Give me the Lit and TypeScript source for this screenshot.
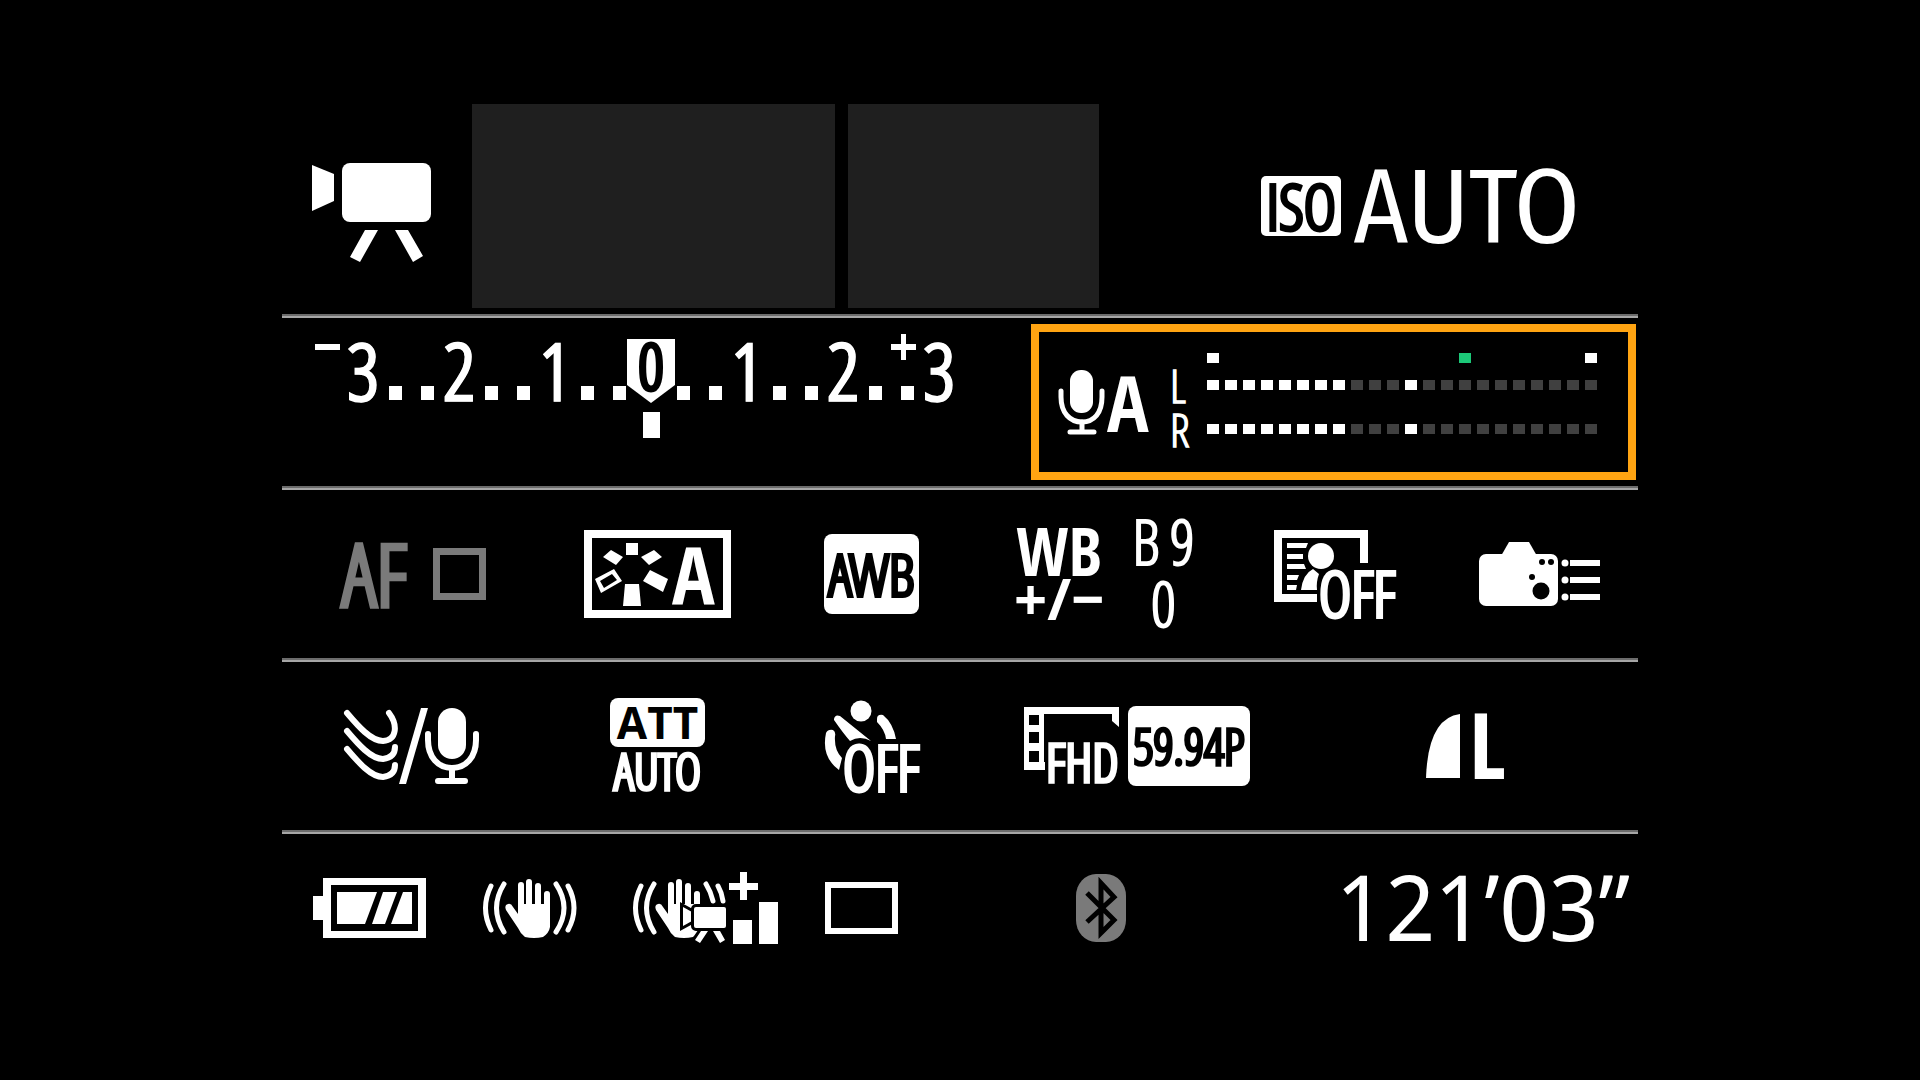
import { LitElement, html, css, svg } from "lit";
import { customElement, property, state } from "lit/decorators.js";
import { classMap } from "lit/directives/class-map.js";

const shared = css`
  button {
    margin: 0;
    padding: 0;
    border: 0;
    background: none;
    color: inherit;
    font: inherit;
    text-align: left;
    cursor: pointer;
  }
  svg {
    display: block;
    flex: none;
    overflow: visible;
    fill: currentColor;
  }
  .line {
    fill: none;
    stroke: currentColor;
  }
  .round {
    stroke-linecap: round;
    stroke-linejoin: round;
  }
  .hole {
    fill: #000;
  }
  .slim {
    font-family: "Open Sans Condensed Light", "Fira Sans Condensed", "Open Sans", sans-serif;
    font-weight: 700;
  }
  .thick {
    -webkit-text-stroke: 2px currentColor;
  }
  text.thick {
    stroke: currentColor;
    stroke-width: 2px;
  }
  .heavy {
    font-family: "Open Sans Condensed", "Open Sans", sans-serif;
    font-weight: 700;
  }
`;

/** Exposure compensation scale, from -3 to +3 in third stops. */
@customElement("exposure-scale")
class ExposureScale extends LitElement {
  @property({ type: Number }) value = 0;

  static styles = [
    shared,
    css`
      :host { display: block; }
      .digit { font-size: 78px; text-anchor: middle; stroke: currentColor; stroke-width: 1px; }
      .zero { font-size: 64px; text-anchor: middle; fill: #000; stroke: #000; stroke-width: 2px; }
    `,
  ];

  render() {
    const pitch = 32;
    const mid = 338;
    const steps = Array.from({ length: 19 }, (_, i) => i - 9);
    const needle = mid + this.value * 3 * pitch;
    return html`
      <svg width="640" height="108" viewBox="0 0 640 108" role="img" aria-label="Exposure compensation">
        <rect x="2" y="14" width="25" height="6" />
        <path d="M578 14h10v-10h5v10h10v6h-10v10h-5v-10h-10z" />
        ${steps.map((s) => {
          const x = mid + s * pitch;
          if (s === 0) return svg`
            <path d="M${x - 24} 9h48v46l-24 18l-24 -18z" />
            <text class="slim zero" x=${x} y="60">0</text>`;
          return s % 3
            ? svg`<rect x=${x - 6} y="56" width="13" height="14" />`
            : svg`<text class="slim digit" x=${x} y="70">${Math.abs(s / 3)}</text>`;
        })}
        <rect x=${needle - 8} y="82" width="17" height="26" />
      </svg>
    `;
  }
}

/** Two-channel audio level meter with reference marks. */
@customElement("level-meter")
class LevelMeter extends LitElement {
  @property({ type: Number }) level = 8;
  @property({ type: Number }) peak = 11;

  static styles = [
    shared,
    css`
      :host {
        display: grid;
        grid-template-columns: 37px auto;
        grid-template-rows: 10px 44px 44px;
        align-items: center;
      }
      .name { font-size: 46px; line-height: 44px; }
      .bar {
        grid-column: 2;
        display: grid;
        grid-template-columns: repeat(22, 12px);
        gap: 6px;
      }
      .bar i { height: 10px; }
      .bar i.off { background: #404040; }
      .bar i.on { background: #fff; }
      .bar i.safe { background: #1cc878; }
    `,
  ];

  private bar(pick: (i: number) => string) {
    return html`<span class="bar">
      ${Array.from({ length: 22 }, (_, i) => html`<i class=${pick(i)}></i>`)}
    </span>`;
  }

  render() {
    const channel = (i: number) => (i < this.level || i === this.peak ? "on" : "off");
    return html`
      ${this.bar((i) => (i === 14 ? "safe" : i === 0 || i === 21 ? "on" : ""))}
      <span class="name slim">L</span>${this.bar(channel)}
      <span class="name slim">R</span>${this.bar(channel)}
    `;
  }
}

const hand = svg`
  <g class="line round" stroke-width="5">
    <path d="M491 886Q480 908 491 930M504 884Q489 908 504 932" />
  </g>
  <g class="line round" stroke-width="6">
    <path d="M521 885V910M529 882V910M538 886V910M547 894V912" />
  </g>
  <path d="M518 904H550V927Q549 933 543 937Q534 939 525 937Q520 933 518 928L506 910Q504 905 508 904Q511 903 513 907L518 914Z" />
`;

const icons = {
  movie: html`<svg width="120" height="112" viewBox="312 150 120 112" role="img" aria-label="Movie recording">
    <path d="M312 165L334 174V201L312 211Z" />
    <rect x="342" y="163" width="89" height="59" rx="8" />
    <path d="M365 230H378L360 262L350 257ZM395 230H408L423 256L413 262Z" />
  </svg>`,
  mic: html`<svg width="46" height="66" viewBox="1058 369 46 66" aria-hidden="true">
    <rect x="1070" y="370" width="23" height="43" rx="11" />
    <path class="line round" stroke-width="5" d="M1061 391V397C1061 413 1070 422 1082 422C1094 422 1102 413 1102 397V391" />
    <path class="line round" stroke-width="5" d="M1082 422V432M1070 432H1094" />
  </svg>`,
  style: html`<svg width="148" height="88" viewBox="584 530 148 88" role="img" aria-label="Picture style">
    <rect class="line" stroke-width="8" x="588" y="534" width="139" height="80" />
    <rect x="626" y="543" width="12" height="12" />
    <path d="M603 557L611 550L623 557L616 565ZM654 550L662 557L649 565L641 557Z" />
    <path d="M625 584H639L641 606H623ZM650 570L668 579L663 592L643 581Z" />
    <path fill-rule="evenodd" d="M595 579L614 569L622 581L601 593ZM600 581L604 588L617 580L612 574Z" />
    <text class="heavy" font-size="80" x="672" y="604">A</text>
  </svg>`,
  lighting: html`<svg width="124" height="90" viewBox="1274 531 124 90" role="img" aria-label="Auto lighting optimizer">
    <path class="line" stroke-width="8" d="M1364 565V536H1278V600H1317" />
    <path d="M1287 545H1308L1306 550H1287ZM1287 556H1303V561H1287ZM1287 566H1304L1306 571H1287ZM1287 577H1299L1297 582H1287ZM1287 587H1297L1296 592H1287Z" />
    <circle cx="1321" cy="558" r="13" />
    <path d="M1301 592Q1303 576 1313 571L1319 576Q1316 584 1317 592Z" />
    <text class="slim thick" font-size="62" x="1319" y="619">OFF</text>
  </svg>`,
  controls: html`<svg width="124" height="66" viewBox="1477 541 124 66" role="img" aria-label="Custom controls">
    <path d="M1500 556L1508 542H1528L1536 556Z" />
    <rect x="1478" y="554" width="79" height="52" rx="7" />
    <g class="hole">
      <circle cx="1541" cy="562" r="3" />
      <circle cx="1550" cy="562" r="3" />
      <circle cx="1531" cy="577" r="3" />
      <circle cx="1540" cy="591" r="8.5" />
    </g>
    <circle cx="1564" cy="563" r="3.5" />
    <circle cx="1564" cy="580" r="3.5" />
    <circle cx="1564" cy="597" r="3.5" />
    <path d="M1569 560H1599V566H1569ZM1569 577H1599V583H1569ZM1569 594H1599V600H1569Z" />
  </svg>`,
  wind: html`<svg width="138" height="80" viewBox="343 706 138 80" role="img" aria-label="Wind filter">
    <path class="line round" stroke-width="6"
      d="M347 713C358 726 371 741 383 741C397 740 398 725 389 713M347 731C358 744 371 759 383 759C391 758 395 754 395 747M347 749C358 762 371 777 383 777C391 776 395 772 395 765" />
    <path d="M399 784L421 708H428L406 784Z" />
    <rect x="438" y="708" width="28" height="51" rx="14" />
    <path class="line round" stroke-width="6" d="M428 734V740C428 757 438 768 452 768C466 768 476 757 476 740V734" />
    <path class="line round" stroke-width="6" d="M452 769V781M438 781H465" />
  </svg>`,
  timer: html`<svg width="98" height="94" viewBox="825 698 98 94" role="img" aria-label="Self-timer">
    <circle cx="861" cy="710" r="10.5" />
    <path d="M877 718Q877 713 883 714Q893 722 896 738H886Q885 729 877 721Z" />
    <path d="M834 718Q835 713 840 715L871 740Q860 734 850 740Q843 732 834 719Z" />
    <path d="M826 732Q828 728 833 729Q836 731 835 735Q834 749 842 757L839 769Q821 756 826 732Z" />
    <text class="slim thick" font-size="62" x="843" y="790">OFF</text>
  </svg>`,
  quality: html`<svg width="102" height="80" viewBox="1024 706 102 80" role="img" aria-label="Movie recording size">
    <path fill-rule="evenodd"
      d="M1024 707H1119V727L1112 721V714H1044V762H1045V770H1024ZM1029 715V725H1039V715ZM1029 732V743H1039V732ZM1029 751V762H1039V751Z" />
    <text class="slim thick" font-size="54" x="1046" y="782">FHD</text>
  </svg>`,
  still: html`<svg width="92" height="68" viewBox="1424 712 92 68" role="img" aria-label="Still image quality">
    <path d="M1459 714V778H1425Q1427 718 1459 714Z" />
    <text class="heavy" font-size="92" x="1468" y="779">L</text>
  </svg>`,
  battery: html`<svg width="114" height="60" viewBox="313 878 114 60" role="img" aria-label="Battery level">
    <path fill-rule="evenodd" d="M323 878H426V938H323V920H313V896H323ZM331 885V931H418V885Z" />
    <path d="M337 892H377L365 924H337ZM383 892H397L385 924H372ZM403 892H412V924H391Z" />
  </svg>`,
  steady: html`<svg width="94" height="62" viewBox="483 877 94 62" role="img" aria-label="Image stabilizer">
    ${hand}
    <path class="line round" stroke-width="5" d="M556 884Q572 908 556 932M568 886Q580 908 568 930" />
  </svg>`,
  digital: html`<svg width="146" height="74" viewBox="633 871 146 74" role="img" aria-label="Digital image stabilizer">
    <g transform="translate(150 0)">${hand}</g>
    <path class="line round" stroke-width="5" d="M706 884Q711 892 713 901M718 886Q722 893 723 901" />
    <g stroke="#000" stroke-width="6" paint-order="stroke">
      <path d="M683 907L692 912V921L683 926Z" />
      <rect x="694" y="907" width="32" height="21" rx="2" />
      <path d="M701 931H708L700 943L695 940ZM713 931H720L725 940L720 943Z" />
    </g>
    <path d="M729 883H740V872H747V883H758V890H747V900H740V890H729Z" />
    <path d="M733 920H752V944H733ZM759 902H778V944H759Z" />
  </svg>`,
  bluetooth: html`<svg width="50" height="68" viewBox="1076 874 50 68" role="img" aria-label="Bluetooth off">
    <rect x="1076" y="874" width="50" height="68" rx="20" ry="22" />
    <path fill="none" stroke="#000" stroke-width="5" d="M1087 893L1114 920L1101 933V883L1114 897L1087 922" />
  </svg>`,
};

@customElement("app-root")
class AppRoot extends LitElement {
  @state() private selected = "audio";

  static styles = [
    shared,
    css`
      :host {
        display: block;
        box-sizing: border-box;
        min-height: 100vh;
        padding: 104px 16px 98px;
        background: #000;
        color: #fff;
        font-family: "Fira Sans Condensed", "Open Sans", sans-serif;
      }
      main {
        max-width: 1356px;
        margin: 0 auto;
      }
      .row {
        display: grid;
        align-items: center;
        min-height: 168px;
      }
      .rule {
        height: 2px;
        margin: 0;
        border: 0;
        border-bottom: 2px solid #a6a6a6;
        background: #6c6c6c;
      }
      .top {
        grid-template-columns: 160fr 363fr 13fr 251fr 539fr;
        min-height: 204px;
        padding: 0 0 6px 30px;
      }
      .levels {
        grid-template-columns: 749fr 607fr;
      }
      .modes {
        grid-template-columns: 246fr 240fr 190fr 260fr 204fr 160fr;
        padding-left: 56px;
      }
      .record {
        grid-template-columns: 267fr 215fr 199fr 401fr 213fr;
        padding-left: 61px;
      }
      .status {
        grid-template-columns: 170fr 150fr 192fr 251fr 100fr 462fr;
        min-height: 148px;
        padding-left: 31px;
      }
      .cell {
        display: flex;
        align-items: center;
      }
      .blank {
        align-self: stretch;
        background: #1f1f1f;
      }
      .blank.last {
        grid-column: 4;
      }
      .iso {
        justify-content: flex-end;
        gap: 12px;
        padding-right: 58px;
      }
      .iso .value {
        padding-top: 4px;
        font-size: 105px;
        line-height: 104px;
      }
      .badge {
        display: flex;
        align-items: center;
        justify-content: center;
        border-radius: 8px;
        background: #fff;
        color: #000;
      }
      .badge.iso-mark {
        width: 80px;
        height: 60px;
        border-radius: 5px;
        font-size: 62px;
        line-height: 60px;
      }
      .badge.awb {
        width: 95px;
        height: 80px;
        font-size: 58px;
        line-height: 80px;
      }
      .badge.rate {
        width: 122px;
        height: 80px;
        font-size: 50px;
        line-height: 80px;
      }
      .badge.att {
        width: 95px;
        height: 49px;
        font-family: "Open Sans", sans-serif;
        font-size: 44px;
        font-weight: 700;
        line-height: 49px;
      }
      .scale {
        justify-self: start;
        padding-left: 31px;
        align-self: start;
        padding-top: 12px;
      }
      .audio {
        align-self: stretch;
        margin: 6px 2px 6px 0;
        padding-left: 19px;
        border: 8px solid transparent;
      }
      .audio.selected {
        border-color: #ffa412;
      }
      .audio .auto {
        width: 63px;
        margin-left: 3px;
        font-size: 78px;
        line-height: 80px;
      }
      .dim {
        color: #7a7a7a;
      }
      .af {
        gap: 26px;
        padding-left: 4px;
        font-size: 86px;
        line-height: 86px;
      }
      .frame {
        width: 39px;
        height: 38px;
        border: 7px solid currentColor;
      }
      .shift {
        gap: 28px;
      }
      .stack {
        display: flex;
        flex-direction: column;
        align-items: center;
      }
      .wb {
        font-size: 66px;
        line-height: 48px;
      }
      .sign {
        font-family: "Open Sans", sans-serif;
        font-size: 58px;
        font-weight: 700;
        line-height: 48px;
      }
      .amount {
        font-size: 62px;
        line-height: 62px;
        padding-bottom: 4px;
      }
      .amount .pair {
        display: flex;
        gap: 10px;
      }
      .att-auto {
        font-size: 50px;
        line-height: 48px;
      }
      .film {
        gap: 2px;
      }
      .shots {
        width: 61px;
        height: 40px;
        border: 6px solid #fff;
      }
      .time {
        justify-self: end;
        padding-right: 8px;
        font-family: "Noto Sans Display", "Noto Sans", sans-serif;
        font-size: 92px;
        font-weight: 400;
        line-height: 90px;
        padding-bottom: 4px;
      }
    `,
  ];

  private cell(id: string, label: string, classes: string, content: unknown) {
    const map: Record<string, boolean> = { cell: true, selected: this.selected === id };
    for (const c of classes.split(" ").filter(Boolean)) map[c] = true;
    return html`<button
      type="button"
      class=${classMap(map)}
      aria-label=${label}
      aria-pressed=${this.selected === id ? "true" : "false"}
      @click=${() => (this.selected = id)}
    >${content}</button>`;
  }

  render() {
    return html`
      <main>
        <section class="row top">
          <div class="cell">${icons.movie}</div>
          <div class="blank"></div>
          <div class="blank last"></div>
          ${this.cell("iso", "ISO AUTO", "iso", html`
            <span class="badge iso-mark slim thick">ISO</span><span class="value">AUTO</span>`)}
        </section>
        <hr class="rule" />

        <section class="row levels">
          ${this.cell("exposure", "Exposure compensation", "scale", html`<exposure-scale .value=${0}></exposure-scale>`)}
          ${this.cell("audio", "Sound recording A, L R", "audio", html`
            ${icons.mic}<span class="auto heavy">A</span>
            <level-meter .level=${8} .peak=${11}></level-meter>`)}
        </section>
        <hr class="rule" />

        <section class="row modes">
          ${this.cell("af", "AF", "af dim", html`<span class="slim thick">AF</span><span class="frame"></span>`)}
          ${this.cell("style", "Picture style A", "", icons.style)}
          ${this.cell("awb", "AWB", "", html`<span class="badge awb slim thick">AWB</span>`)}
          ${this.cell("shift", "WB +/− B 9 0", "shift", html`
            <span class="stack"><span class="wb heavy">WB</span><span class="sign">+/−</span></span>
            <span class="stack amount slim">
              <span class="pair"><span>B</span><span>9</span></span><span>0</span>
            </span>`)}
          ${this.cell("lighting", "Auto lighting optimizer OFF", "", icons.lighting)}
          ${this.cell("controls", "Custom controls", "", icons.controls)}
        </section>
        <hr class="rule" />

        <section class="row record">
          ${this.cell("wind", "Wind filter", "", icons.wind)}
          ${this.cell("att", "ATT AUTO", "", html`
            <span class="stack"><span class="badge att">ATT</span><span class="att-auto slim thick">AUTO</span></span>`)}
          ${this.cell("timer", "Self-timer OFF", "", icons.timer)}
          ${this.cell("size", "FHD 59.94P", "film", html`
            ${icons.quality}<span class="badge rate slim thick">59.94P</span>`)}
          ${this.cell("still", "Still image quality L", "", icons.still)}
        </section>
        <hr class="rule" />

        <section class="row status">
          <div class="cell">${icons.battery}</div>
          <div class="cell">${icons.steady}</div>
          <div class="cell">${icons.digital}</div>
          <div class="cell"><span class="shots"></span></div>
          <div class="cell dim">${icons.bluetooth}</div>
          <div class="time">121’03”</div>
        </section>
      </main>
    `;
  }
}
